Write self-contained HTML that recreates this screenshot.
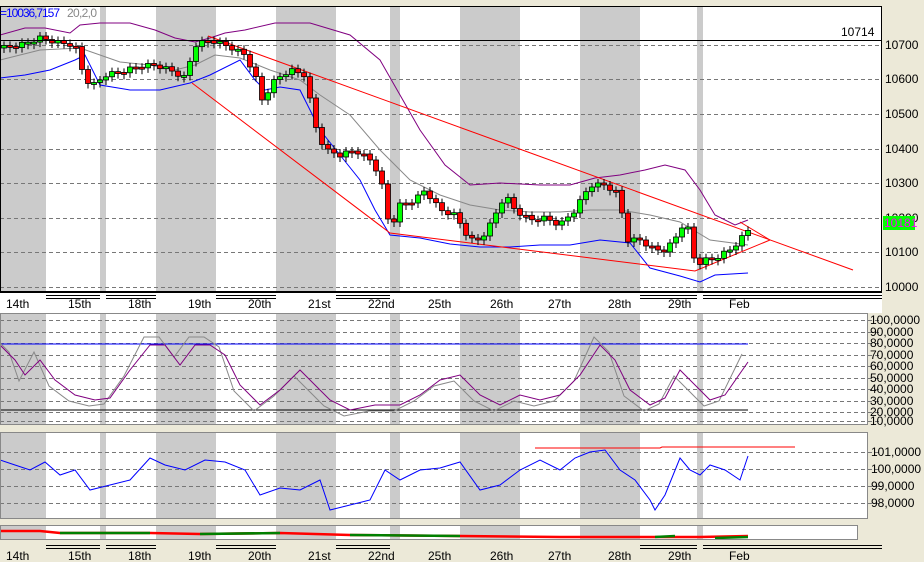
<!DOCTYPE html>
<html><head><meta charset="utf-8"><style>
body{margin:0;background:#ECE9D8;width:924px;height:562px;overflow:hidden;font-family:"Liberation Sans",sans-serif}
svg{position:absolute;left:0;top:0}
text{font-family:"Liberation Sans",sans-serif;font-size:12px;fill:#000}
</style></head><body>
<svg id="s" width="924" height="562" xmlns="http://www.w3.org/2000/svg">
<rect x="0" y="6" width="882" height="286" fill="#fff"/>
<rect x="0" y="313" width="868" height="112" fill="#fff"/>
<rect x="0" y="432" width="868" height="87" fill="#fff"/>
<rect x="0" y="525" width="858" height="15" fill="#fff"/>
<rect x="0" y="292" width="882" height="21" fill="#fff"/>
<g id="bands" fill="#cbcbcb"></g>
<g id="grid" stroke="#777" stroke-dasharray="4,3" stroke-width="1"></g>
<g id="lines" fill="none"></g>
<g id="candles"></g>
<line x1="0" y1="40.5" x2="882" y2="40.5" stroke="#000"/>
<rect x="0.5" y="6.5" width="881" height="285" fill="none" stroke="#000"/>
<rect x="0.5" y="313.5" width="867" height="111" fill="none" stroke="#888"/>
<rect x="0.5" y="432.5" width="867" height="86" fill="none" stroke="#888"/>
<rect x="0.5" y="525.5" width="857" height="14" fill="none" stroke="#888"/>
<line x1="0" y1="292.5" x2="882" y2="292.5" stroke="#000"/>
<g id="dbl" stroke="#000"></g>
<text x="885" y="222">10200</text>
<rect x="883" y="216" width="32" height="14" fill="#00ff00"/>
<text x="884" y="227" style="fill:#ff00ff">10181</text>
<text x="841" y="36">10714</text>
<text x="885" y="49">10700</text><text x="885" y="83">10600</text><text x="885" y="118">10500</text>
<text x="885" y="153">10400</text><text x="885" y="187">10300</text><text x="885" y="256">10100</text><text x="885" y="291">10000</text>
<g style="font-size:11px">
<text x="870" y="324">100,0000</text><text x="870" y="336">90,0000</text><text x="870" y="347">80,0000</text>
<text x="870" y="359">70,0000</text><text x="870" y="370">60,0000</text><text x="870" y="382">50,0000</text>
<text x="870" y="393">40,0000</text><text x="870" y="405">30,0000</text><text x="870" y="416">20,0000</text><text x="870" y="425">10,0000</text>
<text x="871" y="456">101,0000</text><text x="871" y="473">100,0000</text><text x="871" y="490">99,0000</text><text x="871" y="507">98,0000</text>
</g>
<text x="0" y="17" textLength="60" style="fill:#0000ff">=10036,7157</text><text x="67" y="17" textLength="30" style="fill:#888">20,2,0</text>
<g id="dates"></g>
</svg>
<script>
var S='http://www.w3.org/2000/svg';
function el(p,t,a){var e=document.createElementNS(S,t);for(var k in a)e.setAttribute(k,a[k]);document.getElementById(p).appendChild(e);return e;}
var bands=[[0,46],[100,106],[156,216],[276,336],[390,400],[460,520],[580,640],[697,703]];
[[6,286],[313,112],[432,87],[525,15]].forEach(function(r){bands.forEach(function(b){el('bands','rect',{x:b[0],y:r[0],width:b[1]-b[0],height:r[1]});});});
[45,79,114,149,183,218,252,287,320,332,343,355,366,378,389,401,412,421,452,469,486,503].forEach(function(y){el('grid','line',{x1:0,y1:y+.5,x2:882,y2:y+.5});});
function pl(pts,c,w){el('lines','polyline',{points:pts.map(function(p){return p.join(',')}).join(' '),stroke:c,'stroke-width':w||1});}
var up=[[0,35],[25,28],[45,28],[70,33],[80,25],[100,23],[130,23],[155,30],[175,38],[195,42],[210,38],[225,33],[245,30],[275,23],[310,23],[350,35],[380,60],[400,95],[420,130],[445,165],[470,185],[500,183],[540,185],[570,185],[595,178],[620,175],[645,170],[665,165],[685,170],[700,190],[715,215],[735,225],[748,220]];
var mid=[[0,60],[40,50],[80,48],[120,62],[150,65],[175,70],[195,65],[215,55],[240,58],[270,70],[300,80],[320,95],[350,115],[380,150],[410,180],[440,195],[470,205],[500,210],[530,212],[560,212],[590,210],[620,210],[650,215],[680,222],[710,240],[748,245]];
var lo=[[0,78],[25,75],[50,70],[75,60],[85,55],[100,85],[130,90],[160,90],[190,83],[210,75],[240,60],[255,80],[265,90],[280,87],[300,90],[320,130],[340,155],[360,180],[375,210],[390,235],[420,238],[450,244],[480,247],[510,247],[540,245],[570,245],[600,240],[630,243],[650,268],[680,276],[700,282],[715,275],[748,273]];
pl(up,'#800080');pl(mid,'#888');pl(lo,'#0000ff');
pl([[208,36],[853,270]],'#f00');pl([[192,83],[390,233],[695,271],[770,240],[740,222]],'#f00');
var cl=[[0,48],[20,45],[40,38],[60,43],[75,45],[85,80],[95,85],[105,75],[120,72],[140,66],[155,65],[170,70],[185,78],[195,45],[210,40],[230,47],[245,55],[255,75],[262,100],[275,80],[290,70],[305,75],[315,125],[325,150],[340,155],[355,150],[370,160],[380,175],[390,230],[400,205],[415,200],[425,190],[440,210],[455,215],[470,240],[480,240],[490,225],[505,195],[515,210],[530,220],[545,218],[560,225],[575,210],[590,185],[605,185],[620,195],[625,240],[640,240],[655,250],[665,250],[675,240],[680,225],[690,230],[695,265],[705,260],[715,258],[730,250],[740,240],[750,228]];
function at(x){for(var i=1;i<cl.length;i++){if(x<=cl[i][0]){var a=cl[i-1],b=cl[i];return a[1]+(b[1]-a[1])*(x-a[0])/(b[0]-a[0]);}}return cl[cl.length-1][1];}
var prev=at(0),k=0;
for(var x=4;x<=750;x+=6){var c=at(x)+((k++%3)-1)*2,o=prev;var t=Math.min(o,c),h=Math.max(Math.abs(c-o),2);
el('candles','line',{x1:x,y1:t-4,x2:x,y2:t+h+5,stroke:'#000'});
el('candles','rect',{x:x-2.5,y:t,width:5,height:h,fill:c<o?'#00ff00':'#ff0000',stroke:'#000','stroke-width':0.8});prev=c;}
pl([[0,344],[748,344]],'#0000ff');pl([[0,410],[748,410]],'#000');
var st=[[0,345],[15,360],[25,375],[40,360],[55,380],[75,395],[95,400],[110,398],[130,370],[150,345],[165,345],[180,365],[195,345],[210,345],[225,355],[240,385],[260,405],[280,390],[300,370],[315,385],[330,400],[350,410],[375,405],[400,405],[420,395],[440,380],[460,375],[480,395],[500,405],[520,395],[540,400],[560,395],[580,375],[600,345],[615,360],[630,390],[650,405],[665,398],[680,370],[695,385],[710,400],[725,395],[748,362]];
pl(st.map(function(p){return [p[0]-6,p[1]+(p[1]<370?-8:6)]}),'#888');pl(st,'#800080');
pl([[535,448],[660,448],[662,447],[795,447]],'#f00');
var rc=[[0,460],[15,465],[30,470],[45,462],[60,475],[75,470],[90,490],[110,485],[130,480],[150,458],[165,465],[185,470],[205,460],[225,462],[245,470],[260,495],[280,488],[300,490],[320,480],[330,510],[350,505],[370,500],[385,470],[400,480],[420,470],[440,468],[460,462],[480,490],[500,485],[520,470],[540,460],[560,470],[575,458],[590,452],[605,450],[620,470],[635,480],[650,500],[655,510],[665,495],[680,458],[690,470],[700,475],[710,465],[725,470],[740,480],[748,456]];
pl(rc,'#0000ff');
pl([[0,531],[40,531],[60,533],[150,533],[200,534],[280,533],[350,535],[460,536],[560,537],[640,537],[700,537],[748,536]],'#f00',2.5);
pl([[60,533],[150,533]],'#008000',2.5);pl([[200,534],[280,533]],'#008000',2.5);pl([[350,535],[460,536]],'#008000',2.5);pl([[655,537],[675,536]],'#008000',2.5);pl([[715,538],[748,537]],'#008000',2.5);
[[46,100],[106,156],[216,276],[336,390],[640,697],[703,882]].forEach(function(s){[295.5,298.5].forEach(function(y){el('dbl','line',{x1:s[0],y1:y,x2:s[1],y2:y});});[545.5,548.5].forEach(function(y){el('dbl','line',{x1:s[0],y1:y,x2:s[1],y2:y});});});
var d=[[6,'14th'],[68,'15th'],[128,'18th'],[188,'19th'],[248,'20th'],[308,'21st'],[368,'22nd'],[428,'25th'],[490,'26th'],[548,'27th'],[608,'28th'],[668,'29th'],[729,'Feb']];
d.forEach(function(v){el('dates','text',{x:v[0],y:308}).textContent=v[1];el('dates','text',{x:v[0],y:560}).textContent=v[1];});
</script>
</body></html>
